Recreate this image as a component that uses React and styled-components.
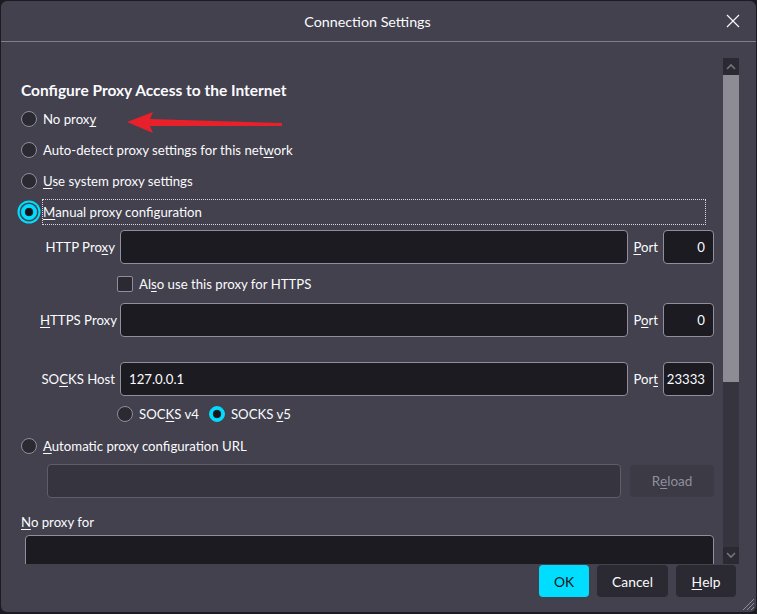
import React from 'react';
import styled, { createGlobalStyle } from 'styled-components';

const GlobalStyle = createGlobalStyle`
  html, body {
    margin: 0;
    padding: 0;
    background: #1c1b22;
  }
  body {
    font-family: Lato, "Noto Sans", sans-serif;
    font-size: 13.2px;
    color: #fbfbfe;
  }
`;

const Page = styled.div`
  position: relative;
  width: 757px;
  height: 614px;
  padding: 1px 1px 2px 1px;
  box-sizing: border-box;
`;

const Dialog = styled.div`
  height: 100%;
  background: #42414d;
  border-radius: 6px;
  display: flex;
  flex-direction: column;
  overflow: hidden;
  position: relative;
`;

const TitleBar = styled.div`
  height: 40px;
  flex: none;
  display: flex;
  align-items: center;
  justify-content: center;
  position: relative;
  border-bottom: 1px solid #807f8a;
  font-size: 14.3px;
  padding-right: 22px;
`;

const CloseButton = styled.div`
  position: absolute;
  right: 16px;
  top: 13px;
  width: 14px;
  height: 14px;
`;

const Body = styled.div`
  flex: 1;
  display: flex;
  flex-direction: column;
  padding-top: 16px;
  min-height: 0;
`;

const ScrollArea = styled.div`
  height: 506px;
  flex: none;
  display: flex;
  margin-right: 17px;
`;

const Content = styled.div`
  flex: 1;
  overflow: hidden;
  padding: 22px 9px 0 20px;
  display: flex;
  flex-direction: column;

  & > * {
    flex-shrink: 0;
  }
`;

const Scrollbar = styled.div`
  width: 16px;
  flex: none;
  display: flex;
  flex-direction: column;
  background: #36353f;
`;

const ScrollArrow = styled.div`
  height: 17px;
  background: #2b2a33;
  display: flex;
  align-items: center;
  justify-content: center;
`;

const ScrollThumb = styled.div`
  height: 307px;
  background: #8d8c95;
`;

const ScrollTrack = styled.div`
  flex: 1;
`;

const Heading = styled.div`
  font-weight: 700;
  font-size: 15.5px;
  line-height: 20px;
`;

const Row = styled.div`
  display: flex;
  align-items: center;
  height: 26px;
  gap: 6px;
  margin-top: ${p => p.$mt || 0}px;
  margin-left: ${p => p.$ml || 0}px;
`;

const Radio = styled.span`
  box-sizing: border-box;
  width: 16px;
  height: 16px;
  flex: none;
  border-radius: 50%;
  border: 1px solid ${p => (p.$checked ? '#00ddff' : '#8f8f9d')};
  background: ${p =>
    p.$checked
      ? 'radial-gradient(circle, #15141a 0 3px, #2b2a33 3.6px 4px, #00ddff 4.6px)'
      : '#2b2a33'};
  box-shadow: ${p => (p.$focused ? '0 0 0 1.5px #42414d, 0 0 0 3.5px #00ddff' : 'none')};
  margin-left: ${p => p.$gapBefore || 0}px;
`;

const Checkbox = styled.span`
  box-sizing: border-box;
  width: 16px;
  height: 16px;
  flex: none;
  border-radius: 2px;
  border: 1px solid #8f8f9d;
  background: #2b2a33;
`;

const Label = styled.span`
  white-space: nowrap;
  line-height: 20px;
`;

const FocusLabel = styled.span`
  flex: 1;
  align-self: stretch;
  display: flex;
  align-items: center;
  border: 1px dotted #d8d8de;
  margin-right: 8px;
  margin-left: -1px;
  white-space: nowrap;
`;

const Key = styled.u`
  text-underline-offset: 2px;
  text-decoration-thickness: 1px;
`;

const ProxyGrid = styled.div`
  display: grid;
  grid-template-columns: 75px 1fr auto 51px;
  column-gap: 5px;
  align-items: center;
  margin-left: 19px;
  margin-top: ${p => p.$mt || 0}px;
`;

const FieldLabel = styled.span`
  text-align: right;
  white-space: nowrap;
`;

const PortLabel = styled.span`
  white-space: nowrap;
`;

const TextBox = styled.div`
  box-sizing: border-box;
  height: ${p => p.$h || 34}px;
  background: #1c1b22;
  border: 1px solid #8f8f9d;
  border-radius: 4px;
  display: flex;
  align-items: center;
  justify-content: ${p => (p.$right ? 'flex-end' : 'flex-start')};
  padding: 0 8px;
`;

const UrlRow = styled.div`
  display: flex;
  gap: 9px;
  align-items: center;
  margin-left: 26px;
  margin-top: 5px;
`;

const DisabledBox = styled.div`
  flex: 1;
  box-sizing: border-box;
  height: 34px;
  background: #36353f;
  border: 1px solid #5e5d68;
  border-radius: 4px;
`;

const ReloadButton = styled.div`
  width: 84px;
  height: 32px;
  border-radius: 4px;
  background: #3b3a45;
  color: #8f8f9d;
  display: flex;
  align-items: center;
  justify-content: center;
  font-size: 13.5px;
`;

const PlainLabel = styled.div`
  line-height: 20px;
  margin-top: 14px;
`;

const NoProxyBox = styled(TextBox)`
  margin: 3px 0 0 4px;
  height: 70px;
`;

const Footer = styled.div`
  display: flex;
  justify-content: flex-end;
  gap: 8px;
  padding: 1px 20px 0 0;
`;

const Button = styled.div`
  height: 32px;
  width: ${p => p.$w}px;
  border-radius: 4px;
  display: flex;
  align-items: center;
  justify-content: center;
  background: ${p => (p.$primary ? '#00ddff' : '#2b2a33')};
  color: ${p => (p.$primary ? '#15141a' : '#fbfbfe')};
  font-size: 13.8px;
`;

const Grip = styled.svg`
  position: absolute;
  right: 1px;
  bottom: 1px;
`;

const Annotation = styled.svg`
  position: absolute;
  left: 0;
  top: 0;
  pointer-events: none;
`;

const Chevron = ({ up }) => (
  <svg width="10" height="7" viewBox="0 0 10 7">
    <path
      d={up ? 'M1 6 L5 2 L9 6' : 'M1 1 L5 5 L9 1'}
      fill="none"
      stroke="#75747e"
      strokeWidth="1.6"
    />
  </svg>
);

export default function App() {
  return (
    <Page>
      <GlobalStyle />
      <Dialog>
        <TitleBar>
          Connection Settings
          <CloseButton>
            <svg width="14" height="14" viewBox="0 0 14 14">
              <path d="M1 1 L13 13 M13 1 L1 13" stroke="#fbfbfe" strokeWidth="1.1" />
            </svg>
          </CloseButton>
        </TitleBar>
        <Body>
          <ScrollArea>
            <Content>
              <Heading>Configure Proxy Access to the Internet</Heading>
              <Row $mt={6}>
                <Radio />
                <Label>No prox<Key>y</Key></Label>
              </Row>
              <Row $mt={5}>
                <Radio />
                <Label>Auto-detect proxy settings for this net<Key>w</Key>ork</Label>
              </Row>
              <Row $mt={5}>
                <Radio />
                <Label><Key>U</Key>se system proxy settings</Label>
              </Row>
              <Row $mt={5}>
                <Radio $checked $focused />
                <FocusLabel><Key>M</Key>anual proxy configuration</FocusLabel>
              </Row>

              <ProxyGrid $mt={5}>
                <FieldLabel>HTTP Pro<Key>x</Key>y</FieldLabel>
                <TextBox />
                <PortLabel><Key>P</Key>ort</PortLabel>
                <TextBox $right>0</TextBox>
              </ProxyGrid>

              <Row $mt={7} $ml={96}>
                <Checkbox />
                <Label>Al<Key>s</Key>o use this proxy for HTTPS</Label>
              </Row>

              <ProxyGrid $mt={6}>
                <FieldLabel><Key>H</Key>TTPS Proxy</FieldLabel>
                <TextBox />
                <PortLabel>P<Key>o</Key>rt</PortLabel>
                <TextBox $right>0</TextBox>
              </ProxyGrid>

              <ProxyGrid $mt={25}>
                <FieldLabel>SO<Key>C</Key>KS Host</FieldLabel>
                <TextBox>127.0.0.1</TextBox>
                <PortLabel>Por<Key>t</Key></PortLabel>
                <TextBox $right>23333</TextBox>
              </ProxyGrid>

              <Row $mt={5} $ml={96}>
                <Radio />
                <Label>SOC<Key>K</Key>S v4</Label>
                <Radio $checked $gapBefore={4} />
                <Label>SOCKS <Key>v</Key>5</Label>
              </Row>

              <Row $mt={6}>
                <Radio />
                <Label><Key>A</Key>utomatic proxy configuration URL</Label>
              </Row>
              <UrlRow>
                <DisabledBox />
                <ReloadButton>R<Key>e</Key>load</ReloadButton>
              </UrlRow>

              <PlainLabel><Key>N</Key>o proxy for</PlainLabel>
              <NoProxyBox />
            </Content>
            <Scrollbar>
              <ScrollArrow><Chevron up /></ScrollArrow>
              <ScrollThumb />
              <ScrollTrack />
              <ScrollArrow><Chevron /></ScrollArrow>
            </Scrollbar>
          </ScrollArea>
          <Footer>
            <Button $primary $w={50}>OK</Button>
            <Button $w={71}>Cancel</Button>
            <Button $w={60}><Key>H</Key>elp</Button>
          </Footer>
        </Body>
        <Grip width="14" height="14" viewBox="0 0 14 14">
          <path d="M13 2 L2 13 M13 6 L6 13 M13 10 L10 13" stroke="#8f8f9d" strokeWidth="1" />
        </Grip>
      </Dialog>
      <Annotation width="757" height="614">
        <polygon
          points="127,122 153,112 150,119 282,123 282,126 150,126 153,133"
          fill="#e8202a"
        />
      </Annotation>
    </Page>
  );
}
